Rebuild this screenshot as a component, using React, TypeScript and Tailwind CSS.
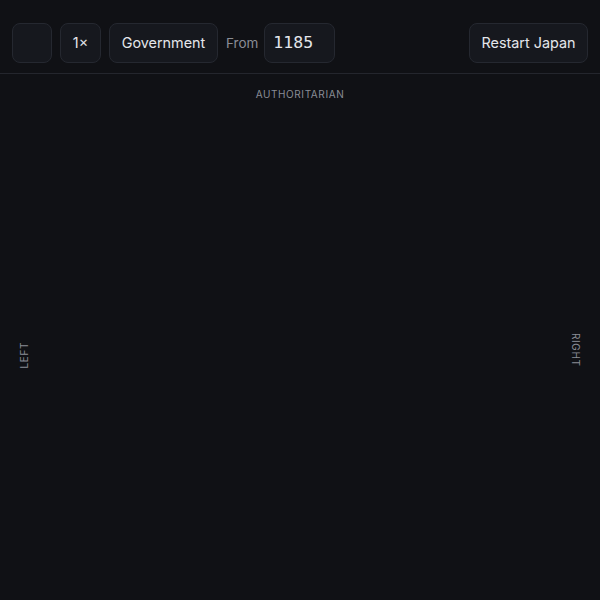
import React from "react";

const btn =
  "h-10 rounded-lg border border-[#252830] bg-[#16181e] text-[14.4px] text-[#e4e6eb] flex items-center justify-center";

export default function App() {
  return (
    <div className="w-[600px] h-[600px] overflow-hidden bg-[#101115] font-['Inter',sans-serif] flex flex-col">
      <header className="flex items-center px-3 pt-[23px] pb-[10px] border-b border-[#24262d]">
        <div className="flex items-center gap-2">
          <button className={`${btn} w-10`} />
          <button className={`${btn} w-[41px]`}>1×</button>
          <button className={`${btn} w-[109px]`}>Government</button>
          <span className="text-[13.5px] text-[#8a8d95] mr-[-2px]">From</span>
          <div
            className={`${btn} w-[71px] justify-start pl-[8px] font-['DejaVu_Sans_Mono',monospace] text-[16.5px]`}
          >
            1185
          </div>
        </div>
        <button className={`${btn} ml-auto w-[119px]`}>Restart Japan</button>
      </header>
      <main className="relative flex-1">
        <div className="text-center pt-[13px] text-[10px] tracking-[0.06em] text-[#8a8d95]">
          AUTHORITARIAN
        </div>
        <span className="absolute left-[17px] top-[268px] [writing-mode:vertical-rl] rotate-180 text-[10px] tracking-[0.06em] text-[#8a8d95]">
          LEFT
        </span>
        <span className="absolute right-[17px] top-[259px] [writing-mode:vertical-rl] text-[10px] tracking-[0.06em] text-[#8a8d95]">
          RIGHT
        </span>
      </main>
    </div>
  );
}
